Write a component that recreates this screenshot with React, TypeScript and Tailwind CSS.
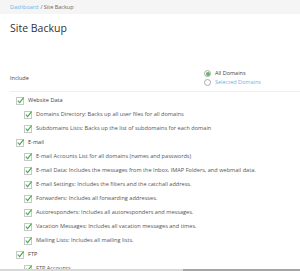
import React from 'react';

const items = [
  { level: 0, label: 'Website Data' },
  { level: 1, label: 'Domains Directory: Backs up all user files for all domains' },
  { level: 1, label: 'Subdomains Lists: Backs up the list of subdomains for each domain' },
  { level: 0, label: 'E-mail' },
  { level: 1, label: 'E-mail Accounts List for all domains (names and passwords)' },
  { level: 1, label: 'E-mail Data: Includes the messages from the Inbox, IMAP Folders, and webmail data.' },
  { level: 1, label: 'E-mail Settings: Includes the filters and the catchall address.' },
  { level: 1, label: 'Forwarders: Includes all forwarding addresses.' },
  { level: 1, label: 'Autoresponders: Includes all autoresponders and messages.' },
  { level: 1, label: 'Vacation Messages: Includes all vacation messages and times.' },
  { level: 1, label: 'Mailing Lists: Includes all mailing lists.' },
  { level: 0, label: 'FTP' },
  { level: 1, label: 'FTP Accounts' },
];

function Check() {
  return (
    <svg width="9" height="9" viewBox="0 0 9 9" className="shrink-0">
      <rect x="0.5" y="1.5" width="7" height="7" fill="#fff" stroke="#c8c8c8" />
      <path d="M1.8 4.6 L3.6 6.6 L7.6 1.6" fill="none" stroke="#4cae4c" strokeWidth="1.2" />
    </svg>
  );
}

export default function App() {
  return (
    <div className="relative h-[271px] overflow-hidden bg-white font-['Open_Sans',sans-serif] text-[#555]">
      {/* Breadcrumb */}
      <div className="flex h-[14px] items-center bg-[#f5f5f5] px-[10px] text-[5.5px]">
        <span className="text-[#6fb3e8]">Dashboard</span>
        <span className="ml-[2px] text-[#666]">/ Site Backup</span>
      </div>

      <h1 className="ml-[10px] mt-[7px] text-[10.5px] leading-[15px] text-[#333]">Site Backup</h1>

      {/* Include */}
      <div className="mt-[33px] ml-[10px] flex border-b border-[#eee] pb-[4px]">
        <div className="w-[194px] pt-[5px] text-[5.5px] leading-[8px] text-[#444]">Include</div>
        <div className="flex flex-col text-[5.5px] leading-[9px]">
          <label className="flex items-center gap-[4px]">
            <span className="flex h-[7px] w-[7px] items-center justify-center rounded-full border border-[#aaa]">
              <span className="h-[4px] w-[4px] rounded-full bg-[#5cb85c]" />
            </span>
            <span className="text-[#444]">All Domains</span>
          </label>
          <label className="flex items-center gap-[4px]">
            <span className="h-[7px] w-[7px] rounded-full border border-[#aaa]" />
            <span className="text-[#6fb3e8]">Selected Domains</span>
          </label>
        </div>
      </div>

      {/* Options */}
      <div className="pt-[1px]">
        {items.map((it) => (
          <div
            key={it.label}
            className={`flex h-[14px] items-center gap-[3px] whitespace-nowrap text-[5.6px] ${
              it.level === 0 ? 'pl-[16px] text-[#444]' : 'pl-[24px]'
            }`}
          >
            <Check />
            <span>{it.label}</span>
          </div>
        ))}
      </div>

      {/* scrollbar */}
      <div className="absolute bottom-0 left-0 right-0 flex h-[2px]">
        <div className="w-[183px] bg-[#d8d8d8]" />
        <div className="flex-1 bg-[#a6a6a6]" />
      </div>
    </div>
  );
}
